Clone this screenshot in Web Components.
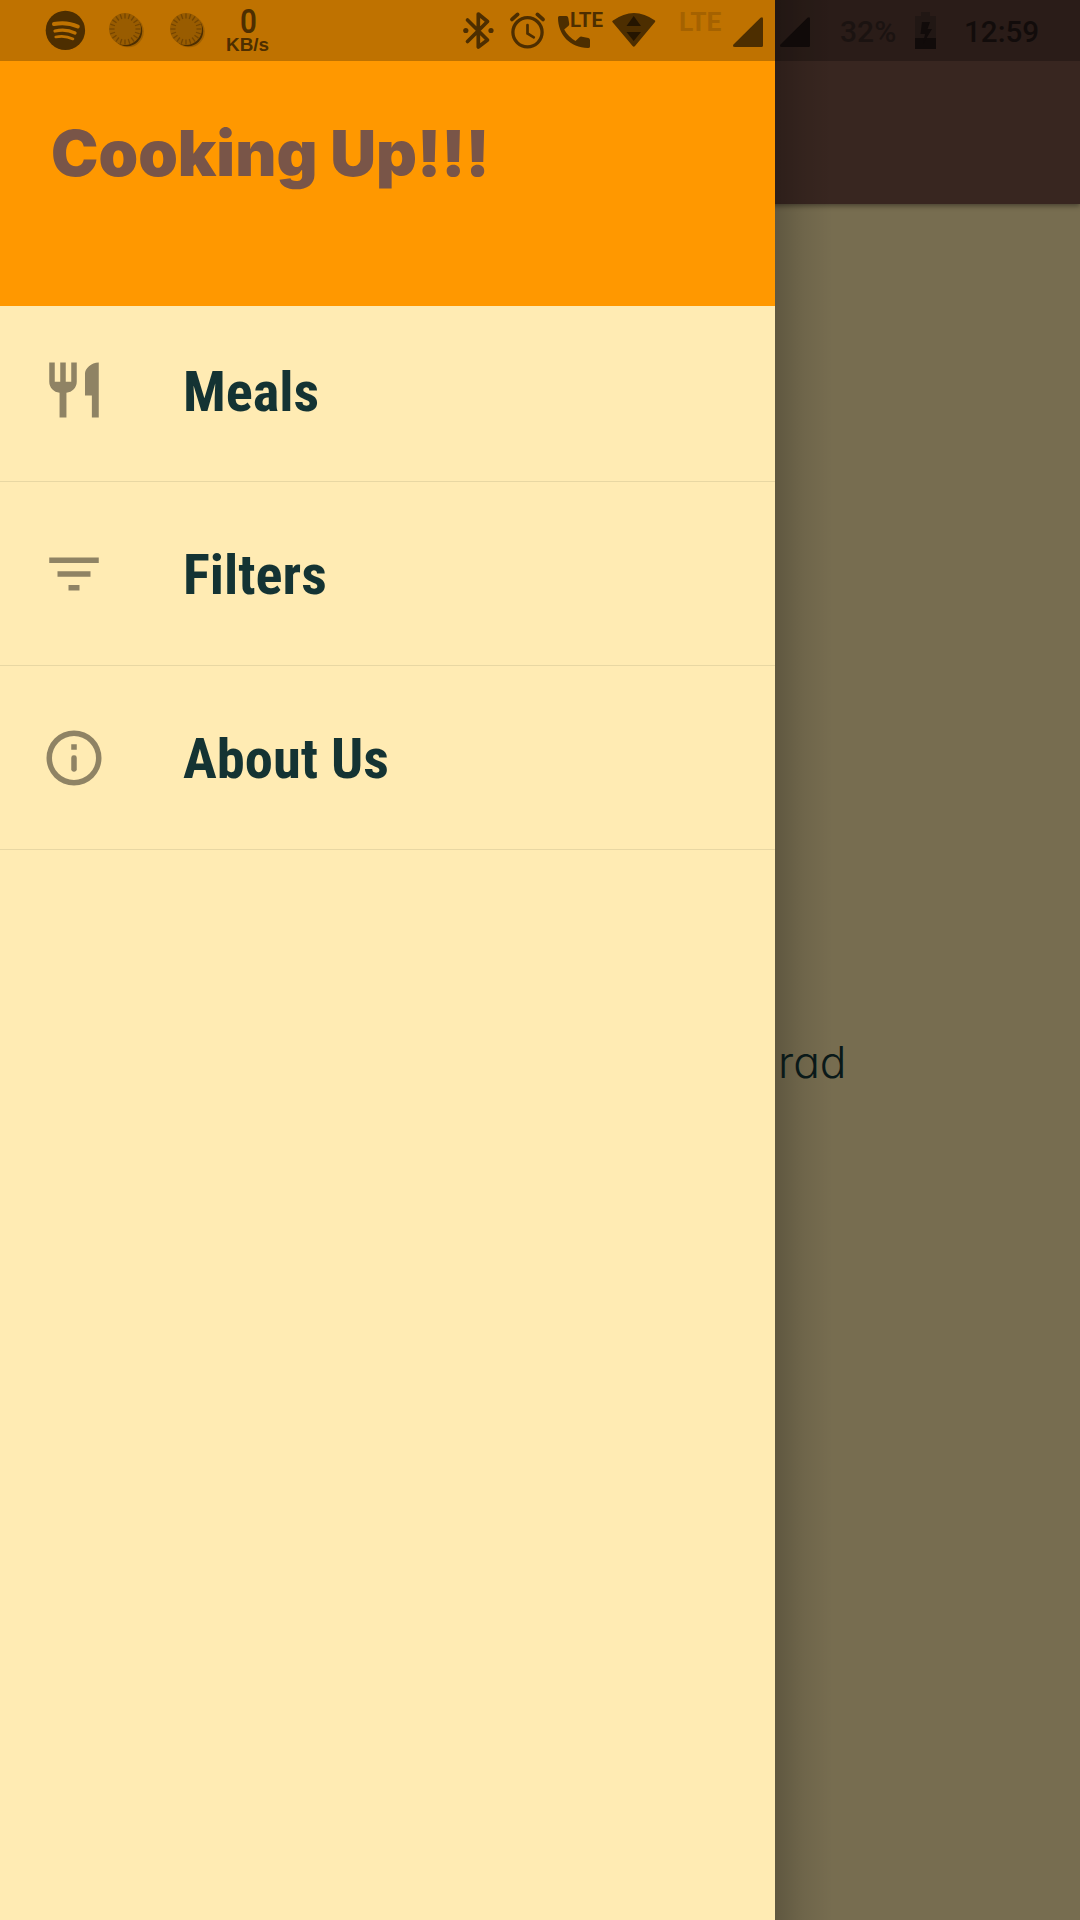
<!DOCTYPE html>
<html lang="en"><head><meta charset="utf-8"><title>Cooking Up</title>
<style>html,body{margin:0;background:#776d50}body{width:1080px;height:1920px;overflow:hidden}</style></head>
<body><meals-app></meals-app>
<script>
// A single line of text stretched horizontally to the width of its box.
class FitText extends HTMLElement{
  constructor(){super();this.attachShadow({mode:'open'}).innerHTML=`<style>
  :host{display:block;flex:none;white-space:nowrap}span{display:inline-block;transform-origin:0 50%}</style><span><slot></slot></span>`}
  connectedCallback(){this.style.width=this.getAttribute('w')+'px';this.fit();document.fonts.ready.then(()=>this.fit())}
  fit(){const s=this.shadowRoot.querySelector('span');const w=s.offsetWidth;if(w)s.style.transform=`scaleX(${this.getAttribute('w')/w})`}
}
customElements.define('fit-text',FitText);

const notch=Array.from({length:20},(_,i)=>`<path d="M0-10.5V-15.5" transform="rotate(${i*18})"/>`).join('');
const coin=x=>`<svg style="margin-left:${x}px" width="38" height="61" viewBox="108 0 38 61"><circle cx="128" cy="31.5" r="15.8" fill="#7d4b00" opacity=".45"/><circle cx="127" cy="31" r="15.2" fill="#4d2e00"/><circle cx="125" cy="29" r="16" fill="#995c00"/><g transform="translate(125 29)" stroke="#764600" stroke-width="1.3">${notch}</g></svg>`;
class StatusBar extends HTMLElement{
  constructor(){super();this.attachShadow({mode:'open'}).innerHTML=`<style>
  :host{display:flex;height:61px;background:rgba(0,0,0,.25);align-items:flex-start;font-family:Roboto,sans-serif;color:#4d2e00}
  svg{display:block;flex:none;fill:#4d2e00}
  .net{display:flex;flex-direction:column;width:42px;margin-left:19px;font-weight:700}
  .zero{font-size:33px;line-height:32px;margin:6px 0 0 13.5px;font-weight:600}
  .kb{font:700 18px/18px "Liberation Sans",sans-serif;margin-top:-2px}
  .lte{font:700 25px/25px Roboto,sans-serif;color:#a56200;margin:10px 0 0 22px}
  .pct{font-size:29.5px;line-height:30px;font-weight:500;margin:17px 0 0 29px;color:#1b1311}
  .clock{font-size:30px;line-height:30px;font-weight:500;margin:17px 0 0 27px;color:#120c0b}
  </style>
  <svg style="margin-left:45px" width="41" height="61" viewBox="45 0 41 61"><circle cx="65.4" cy="30.4" r="19.7"/><g fill="none" stroke="#bf7200" stroke-linecap="round"><path d="M54 24Q67 21.5 77.8 26.5" stroke-width="4"/><path d="M55 31Q66 28.5 75 33" stroke-width="3.3"/><path d="M55.7 37Q65 35 73 39" stroke-width="2.6"/></g></svg>
  ${coin(22)}${coin(23)}
  <div class="net"><fit-text class="zero" w="17">0</fit-text><fit-text class="kb" w="43">KB/s</fit-text></div>
  <svg style="margin-left:194px" width="32" height="61" viewBox="462 0 32 61"><path d="M467.5 20L487.5 40L478.3 47V14L487.5 21.5L467.5 41.5" fill="none" stroke="#4d2e00" stroke-width="3.7" stroke-linejoin="round" stroke-linecap="round"/><circle cx="465.8" cy="30.5" r="2.6"/><circle cx="491" cy="30.5" r="2.6"/></svg>
  <svg style="margin-left:15px" width="38" height="61" viewBox="509 0 38 61"><g fill="none" stroke="#4d2e00" stroke-width="3.3" stroke-linecap="round"><circle cx="527.5" cy="32.3" r="14.6"/><path d="M512 19.4L517.6 14.4M543 19.4L537.4 14.4" stroke-width="3.8"/><path d="M527.5 25V33.5L533.8 37.3" stroke-width="2.7"/></g></svg>
  <svg style="margin-left:11px" width="47" height="61" viewBox="558 0 47 61"><path d="M559.5 16H566.3Q568 16 568.3 18L569.2 23.5Q569.5 25 568.3 26L564.2 29.5Q568 36.5 575.5 41L579.5 37.2Q580.5 36.3 582 36.7L588.4 38Q590 38.3 590 40V46.5Q590 48 588 48C570 47.5 558 35 558 17.5Q558 16 559.5 16Z"/><text x="570" y="26.8" textLength="33" lengthAdjust="spacingAndGlyphs" font-family="Roboto,sans-serif" font-weight="700" font-size="19.4">LTE</text></svg>
  <svg style="margin-left:6px" width="46" height="61" viewBox="611 0 46 61"><path d="M613 20.6Q634 5.4 655 20.6Q655.6 21.2 655 22L635 46Q633.8 47.4 632.6 46L612.4 22Q611.8 21.2 613 20.6Z"/><path d="M626.5 26H641L633.7 16ZM626.5 32H641L633.7 41Z" fill="#241500"/></svg>
  <fit-text class="lte" w="42">LTE</fit-text>
  <svg style="margin-left:11px" width="32" height="61" viewBox="732 0 32 61"><path d="M733.5 44.5L760.5 17.8Q763 16 763 19V45.5Q763 47 761.5 47H735Q732 47 733.5 44.5Z"/></svg>
  <svg style="margin-left:15px;fill:#100a09" width="32" height="61" viewBox="732 0 32 61"><path d="M733.5 44.5L760.5 17.8Q763 16 763 19V45.5Q763 47 761.5 47H735Q732 47 733.5 44.5Z"/></svg>
  <fit-text class="pct" w="56">32%</fit-text>
  <svg style="margin-left:18px" width="23" height="61" viewBox="914 0 23 61"><path d="M921 12H930V16H936V38H915V16H921Z" fill="#211714"/><path d="M915 38H936V49H915Z" fill="#110b0a"/><path d="M922 22H930L927.5 29H932L923 44L925 34H920.5Z" fill="#110b0a"/></svg>
  <fit-text class="clock" w="75">12:59</fit-text>`}
}
customElements.define('status-bar',StatusBar);

class HomeScreen extends HTMLElement{
  constructor(){super();this.attachShadow({mode:'open'}).innerHTML=`<style>
  :host{display:flex;flex-direction:column;background:#776d50;color:#0a1919}
  header{height:204px;background:#382620;box-shadow:0 2px 5px rgba(0,0,0,.4)}
  fit-text{margin:828px 0 0 778px;font:300 43px/60px Inter,sans-serif;font-feature-settings:"cv11" 1}
  </style><header></header><fit-text w="69">rad</fit-text>`}
}
customElements.define('home-screen',HomeScreen);

class DrawerItem extends HTMLElement{
  constructor(){super();this.attachShadow({mode:'open'}).innerHTML=`<style>
  :host{display:flex;box-sizing:border-box;height:183.8px;align-items:flex-end;padding:0 0 54px 41px;border-bottom:1.4px solid #e8d7a3}
  :host(:first-of-type){height:176px}
  ::slotted(svg){display:block;flex:none;width:66px;height:66px;margin-bottom:4px;fill:#8f8364}
  ::slotted(fit-text){margin:0 0 2.5px 76px;font:700 56px/66px "Roboto Condensed",Roboto,sans-serif;font-stretch:75%;color:#143333}
  </style><slot name="icon"></slot><slot></slot>`}
}
customElements.define('drawer-item',DrawerItem);

class MainDrawer extends HTMLElement{
  constructor(){super();this.attachShadow({mode:'open'}).innerHTML=`<style>
  :host{display:flex;height:1920px}
  .panel{flex:none;display:flex;flex-direction:column;width:775.4px;background:#ffebb3}
  .shade{width:58px;background:linear-gradient(90deg,rgba(0,0,0,.2),rgba(0,0,0,.07) 50%,transparent)}
  header{flex:none;box-sizing:border-box;height:306px;background:#ff9800;padding:113px 0 0 50.5px}
  h1{margin:0;font:900 63px/80px Inter,sans-serif;color:#795548}
  </style>
  <div class="panel"><header><h1><fit-text w="438.5">Cooking Up!!!</fit-text></h1></header>
  <drawer-item><svg slot="icon" viewBox="0 0 24 24"><path d="M11 9H9V2H7v7H5V2H3v7c0 2.12 1.66 3.84 3.75 3.97V22h2.5v-9.03C11.34 12.84 13 11.12 13 9V2h-2v7zm5-3v8h2.5v8H21V2c-2.76 0-5 2.24-5 4z"/></svg><fit-text w="136">Meals</fit-text></drawer-item>
  <drawer-item><svg slot="icon" viewBox="0 0 24 24"><path d="M10 18h4v-2h-4v2zM3 6v2h18V6H3zm3 7h12v-2H6v2z"/></svg><fit-text w="144">Filters</fit-text></drawer-item>
  <drawer-item><svg slot="icon" viewBox="0 0 24 24"><path d="M12 2a10 10 0 1 0 0 20 10 10 0 0 0 0-20zm0 18a8 8 0 1 1 0-16 8 8 0 0 1 0 16zM11 7h2v2h-2z"/><rect x="11" y="11" width="2" height="6" rx=".9"/></svg><fit-text w="206">About Us</fit-text></drawer-item>
  </div><div class="shade"></div>`}
}
customElements.define('main-drawer',MainDrawer);

class MealsApp extends HTMLElement{
  constructor(){super();this.attachShadow({mode:'open'}).innerHTML=`<style>
  :host{display:grid;grid-template:1920px / 1080px;overflow:hidden}
  home-screen,main-drawer,status-bar{grid-area:1/1}
  status-bar{align-self:start}
  </style><home-screen></home-screen><main-drawer></main-drawer><status-bar></status-bar>`}
}
customElements.define('meals-app',MealsApp);
</script></body></html>
